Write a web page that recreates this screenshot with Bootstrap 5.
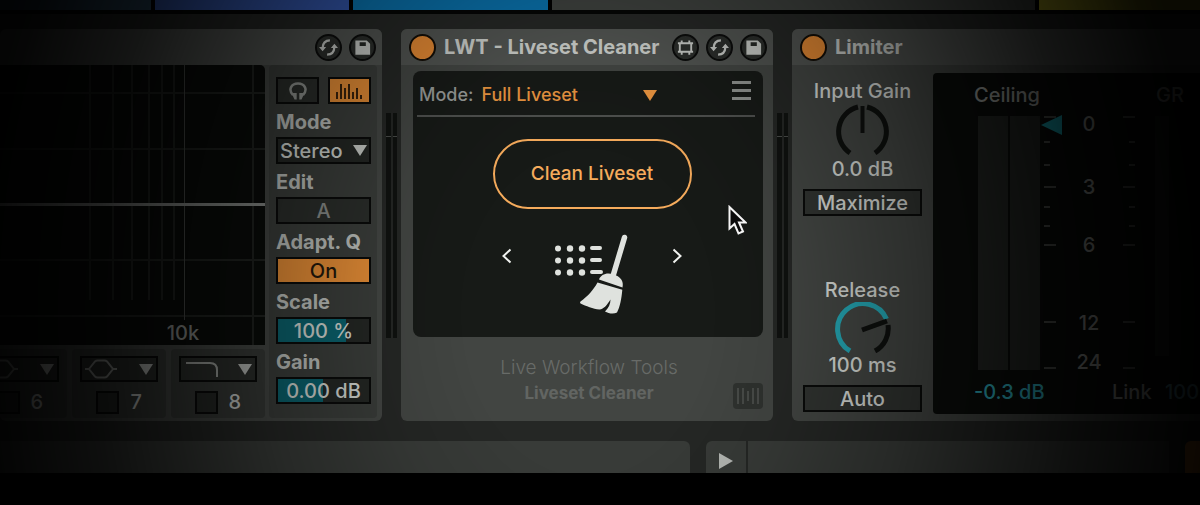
<!DOCTYPE html>
<html lang="en" data-bs-theme="dark">
<head>
<meta charset="utf-8">
<meta name="viewport" content="width=device-width, initial-scale=1">
<title>Liveset Cleaner</title>
<link href="https://cdn.jsdelivr.net/npm/bootstrap@5.3.0/dist/css/bootstrap.min.css" rel="stylesheet">
<script src="https://cdn.jsdelivr.net/npm/bootstrap@5.3.0/dist/js/bootstrap.bundle.min.js" defer></script>
<style>
  :root { --ink: #c8cbc7; --edge: #0a0b0a; --panel: #424542; --orange: #e08a35; --teal: #0b606b; }
  body { background: #000; color: var(--ink); font-family: Inter, "Liberation Sans", sans-serif; font-size: 20px; line-height: 24px; font-weight: 500; overflow-x: hidden; }
  button, select, input { font: inherit; color: inherit; }
  svg { display: block; }

  .clips { height: 10px; gap: 4px; }
  .rack { background: #252725; border-top: 4px solid #050605; padding: 15px 0 20px; gap: 4px; }
  .device { background: var(--panel); border-radius: 6px; overflow: hidden; min-width: 0; height: 392px; }
  .device-head { background: #505350; height: 36px; gap: 8px; font-weight: 700; }
  .lead-device { flex: 382 1 0; }
  .tool-device { flex: 0 0 372px; }
  .tail-device { flex: 408 1 0; border-radius: 6px 0 0 6px; }

  .power { width: 27px; height: 27px; border-radius: 50%; border: 2px solid #140f08; background: #e08733; padding: 0; }
  .round-btn { width: 27px; height: 27px; border-radius: 50%; border: 2px solid #0c0d0c; background: #2b2e2b; padding: 0; display: grid; place-items: center; color: #c4c7c3; }
  .head-tools { gap: 7px; padding-right: 6px; }

  .link-meter { width: 11px; height: 225px; margin-top: 84px; gap: 2px; }
  .link-meter span { flex: 1; background: linear-gradient(#101210 23px, #4a4d4a 23px, #4a4d4a 24px, #101210 24px); }

  .graph { background: #0a0c0a; height: 280px; border-radius: 0 5px 0 0; overflow: hidden; }
  .bands { gap: 5px; }
  .band { flex: 0 0 94px; background: #363936; border-radius: 4px; height: 69px; padding: 7px 8px; }
  .band-type { height: 26px; border: 2px solid var(--edge); background: #2b2e2b; padding: 0 3px; width: 100%; color: #b5b8b4; }
  .band-check { appearance: none; width: 23px; height: 23px; border: 2px solid var(--edge); background: #262926; margin: 0; }
  .side { flex: 0 0 108px; background: #393c39; border-radius: 4px; padding: 12px 6px 12px 7px; margin-right: 5px; height: 353px; }
  .side-label { height: 33px; line-height: 36px; font-weight: 700; color: #b8bbb7; white-space: nowrap; }
  .cell { display: block; width: 100%; height: 27px; line-height: 22px; border: 2px solid var(--edge); background: #2a2d2a; padding: 0; text-align: center; border-radius: 0; color: #ccd0cb; }
  .cell-on { background: var(--orange); color: #21170c; }
  .cell-select { appearance: none; text-align: left; padding: 0 2px; background: #232623; }
  .select-wrap::after { content: ""; position: absolute; right: 4px; top: 8px; border: 7px solid transparent; border-top: 11px solid #c4c7c3; border-bottom: 0; pointer-events: none; }

  .screen { background: #171a17; border-radius: 8px; margin: 6px 10px 0 12px; height: 266px; }
  .screen-bar { margin: 0 8px 0 4px; height: 46px; border-bottom: 2px solid #4e504e; padding: 3px 4px 0 2px; font-size: 18px; }
  .mode-select { appearance: none; border: 0; background: transparent; color: #e89440; width: 176px; padding: 0; height: 26px; }
  .mode-pick::after { border-top-color: #e89440; right: 0; }
  .menu-btn { border: 0; background: none; padding: 0; color: #8e918e; }
  .clean-btn { width: 199px; height: 70px; border: 2px solid #f5ab5c; border-radius: 35px; background: transparent; color: #f5ab5c; margin-top: 22px; font-size: 19px; }
  .step-btn { border: 0; background: none; padding: 0; color: #f0f2ef; margin-top: 14px; }
  .stage { height: 85px; margin-top: 25px; gap: 43px; }
  .credit { color: #686b68; font-weight: 300; font-size: 19px; line-height: 25px; padding-top: 18px; }
  .credit strong { font-size: 17px; font-weight: 700; color: #626562; }
  .bars-btn { right: 10px; bottom: 12px; border: 0; background: #2f322f; border-radius: 4px; padding: 4px 2px; width: 30px; height: 26px; }
  .pointer { left: 728px; top: 205px; z-index: 3; }

  .knobs { flex: 0 0 119px; margin: 0 11px; height: 347px; padding-top: 14px; color: #d4d7d3; }
  .knob-cell { background: #303330; color: #d4d7d3; }
  .levels { background: #0b0d0b; border-radius: 4px 0 0 4px; margin-top: 8px; height: 341px; overflow: hidden; }
  .levels text { font-size: 20px; fill: #9a9d99; }

  .status { height: 32px; background: #252725; }
  .status-pane { background: #383b38; }
  .play-btn { width: 40px; border: 0; background: #383b38; border-radius: 6px 0 0 0; padding: 7px 0 0; display: grid; place-items: center; }
  .shade { position: fixed; inset: 0; pointer-events: none; z-index: 2;
    background: radial-gradient(52% 160% at 49% 62%, rgba(0,0,0,0) 20%, rgba(0,0,0,.08) 33%, rgba(0,0,0,.3) 52%, rgba(0,0,0,.56) 68%, rgba(0,0,0,.75) 80%, rgba(0,0,0,.92) 96%, rgba(0,0,0,.94) 100%); }
</style>
</head>
<body>
<svg width="0" height="0" class="position-absolute" aria-hidden="true">
  <defs>
    <symbol id="swap" viewBox="0 0 20 20">
      <g fill="none" stroke="currentColor" stroke-width="2.400"><path d="M11.500 2.500C6.500 2.500 4 6 3.800 10.500M8.500 17.500C13.500 17.500 16 14 16.200 9.500"/></g>
      <path d="M0 9.500h7.500L3.800 14zM12.500 10.500H20L16.200 6z" fill="currentColor"/>
    </symbol>
    <symbol id="disk" viewBox="0 0 20 20">
      <path d="M2.500 2.500h12L18 6v11.500H2.500z" fill="currentColor"/><path d="M7 4.500h6.500v4H7z" fill="#262926"/>
    </symbol>
    <symbol id="frame" viewBox="0 0 20 20">
      <path d="M4 5.500h12v9H4zM6 2.500v3M14 2.500v3M6 14.500v3M14 14.500v3M2 5.500h16M2 14.500h16" fill="none" stroke="currentColor" stroke-width="2"/>
    </symbol>
    <symbol id="bell" viewBox="0 0 32 20">
      <path d="M0 10h4M28 10h4M4 10L10 2.500Q11 1.500 12.500 1.500h7Q21 1.500 22 2.500L28 10L22 17.500Q21 18.500 19.500 18.500h-7Q11 18.500 10 17.500Z" fill="none" stroke="#8d908c" stroke-width="2"/>
    </symbol>
    <symbol id="down" viewBox="0 0 14 11"><path d="M0 0h14L7 11z" fill="currentColor"/></symbol>
  </defs>
</svg>

<div class="clips d-flex">
  <div style="flex:151 1 0;background:#2b475e"></div>
  <div style="flex:195 1 0;background:#3355a8"></div>
  <div style="flex:195 1 0;background:#0a6fa8"></div>
  <div style="flex:484 1 0;background:#3d403d"></div>
  <div style="flex:161 1 0;background:#b0a922"></div>
</div>

<main class="rack d-flex">
  <section class="device lead-device">
    <header class="device-head d-flex align-items-center justify-content-end">
      <div class="head-tools d-flex">
        <button class="round-btn" aria-label="Hot-swap"><svg width="19" height="19"><use href="#swap"/></svg></button>
        <button class="round-btn" aria-label="Save preset"><svg width="19" height="19"><use href="#disk"/></svg></button>
      </div>
    </header>
    <div class="d-flex gap-1">
      <div class="flex-grow-1 overflow-hidden">
        <div class="graph d-flex justify-content-end">
          <svg class="flex-shrink-0" width="265" height="280" viewBox="0 0 265 280">
            <g stroke="#1f221f" stroke-width="2">
              <path d="M0 28h265M0 84h265M0 195h265M0 251h265"/>
              <path d="M90 0v235M113 0v235M132 0v235M149 0v235M162 0v235M174 0v235M253 0v280"/>
            </g>
            <path d="M184.500 0v255" stroke="#454845"/>
            <path d="M0 139.500h265" stroke="#858885" stroke-width="3"/>
            <text x="183" y="275" text-anchor="middle" font-size="20" fill="#858885">10k</text>
          </svg>
        </div>
        <div class="bands d-flex justify-content-end mt-1">
          <div class="band">
            <button class="band-type d-flex align-items-center justify-content-between" aria-label="Band 6 type"><svg width="32" height="20"><use href="#bell"/></svg><svg width="14" height="11"><use href="#down"/></svg></button>
            <label class="d-flex justify-content-between align-items-center pt-2 ps-3 pe-3"><input class="band-check" type="checkbox"><span>6</span></label>
          </div>
          <div class="band">
            <button class="band-type d-flex align-items-center justify-content-between" aria-label="Band 7 type"><svg width="32" height="20"><use href="#bell"/></svg><svg width="14" height="11"><use href="#down"/></svg></button>
            <label class="d-flex justify-content-between align-items-center pt-2 ps-3 pe-3"><input class="band-check" type="checkbox"><span>7</span></label>
          </div>
          <div class="band">
            <button class="band-type d-flex align-items-center justify-content-between" aria-label="Band 8 type"><svg width="36" height="20" viewBox="0 0 36 20"><path d="M2 4h24q7 0 7 7v7" fill="none" stroke="#9c9f9b" stroke-width="2"/></svg><svg width="14" height="11"><use href="#down"/></svg></button>
            <label class="d-flex justify-content-between align-items-center pt-2 ps-3 pe-3"><input class="band-check" type="checkbox"><span>8</span></label>
          </div>
        </div>
      </div>
      <div class="side">
        <div class="d-flex" style="gap:9px">
          <button class="cell" aria-label="Audition"><svg class="mx-auto" width="20" height="20" viewBox="0 0 20 20"><path d="M5 14C0 9 3 2.500 10 2.500S20 9 15 14" fill="none" stroke="#8d908c" stroke-width="2.500"/><path d="M3.500 12h5.200V18.500H6.500zM16.500 12h-5.200V18.500H13.500z" fill="#8d908c"/></svg></button>
          <button class="cell cell-on" aria-label="Analyze"><svg class="mx-auto" width="30" height="20" viewBox="0 0 30 20"><path d="M2 18v-7M6 18V3M10 18V7M14 18V3M18 18v-7M22 18V7M26 18v-4" stroke="#3a220c" stroke-width="2"/></svg></button>
        </div>
        <label class="side-label d-block" for="eqMode">Mode</label>
        <div class="position-relative select-wrap"><select id="eqMode" class="cell cell-select"><option>Stereo</option></select></div>
        <label class="side-label d-block" for="eqEdit">Edit</label>
        <button id="eqEdit" class="cell" style="color:#858885">A</button>
        <label class="side-label d-block" for="eqAdapt">Adapt. Q</label>
        <button id="eqAdapt" class="cell cell-on">On</button>
        <label class="side-label d-block" for="eqScale">Scale</label>
        <input id="eqScale" class="cell" value="100 %" style="background:linear-gradient(90deg,var(--teal) 75%,#232623 75%)">
        <label class="side-label d-block" for="eqGain">Gain</label>
        <input id="eqGain" class="cell" value="0.00 dB" style="background:linear-gradient(90deg,var(--teal) 50%,#232623 50%)">
      </div>
    </div>
  </section>

  <div class="link-meter d-flex"><span></span><span></span></div>

  <section class="device tool-device position-relative">
    <header class="device-head d-flex align-items-center ps-2">
      <button class="power" aria-label="Device on"></button>
      <span class="flex-grow-1 text-nowrap">LWT - Liveset Cleaner</span>
      <div class="head-tools d-flex">
        <button class="round-btn" aria-label="Edit device"><svg width="19" height="19"><use href="#frame"/></svg></button>
        <button class="round-btn" aria-label="Hot-swap"><svg width="19" height="19"><use href="#swap"/></svg></button>
        <button class="round-btn" aria-label="Save preset"><svg width="19" height="19"><use href="#disk"/></svg></button>
      </div>
    </header>
    <div class="screen">
      <div class="screen-bar d-flex align-items-center">
        <label for="cleanMode" class="pe-2" style="color:#969996">Mode:</label>
        <div class="position-relative select-wrap mode-pick"><select id="cleanMode" class="mode-select"><option>Full Liveset</option></select></div>
        <button class="menu-btn ms-auto mb-2" aria-label="Menu"><svg width="19" height="19" viewBox="0 0 19 19"><path d="M0 1.500h19M0 9.500h19M0 17.500h19" stroke="currentColor" stroke-width="3"/></svg></button>
      </div>
      <div class="text-center ps-2"><button class="clean-btn">Clean Liveset</button></div>
      <div class="stage d-flex justify-content-center align-items-start ps-2">
        <button class="step-btn" aria-label="Previous"><svg width="10" height="16" viewBox="0 0 10 16"><path d="M8.500 1.500L1.500 8l7 6.500" fill="none" stroke="currentColor" stroke-width="2"/></svg></button>
        <svg width="74" height="82" viewBox="0 0 74 82" fill="#dfe2de" class="flex-shrink-0">
          <g>
            <circle cx="3" cy="14.500" r="3"/><circle cx="15" cy="14.500" r="3.200"/><circle cx="27" cy="14.500" r="3.200"/>
            <circle cx="3" cy="26.500" r="3"/><circle cx="15" cy="26.500" r="3.200"/><circle cx="27" cy="26.500" r="3.200"/>
            <circle cx="3" cy="38.500" r="3"/><circle cx="15" cy="38.500" r="3.200"/><circle cx="27" cy="38.500" r="3.200"/>
          </g>
          <path d="M37 14h8M37 26h8M37 38h9" stroke="#dfe2de" stroke-width="4" stroke-linecap="round"/>
          <path d="M69.500 3.500L58 42" stroke="#dfe2de" stroke-width="5.500" stroke-linecap="round"/>
          <path d="M44 45.500C46 40.500 51.500 38.300 58 40.300C65.500 42.500 69 47 67.500 53.500Z"/>
          <path d="M42.500 48.500L67.300 55.800C66.500 65 65 73 62 78.500C58.500 80.500 53.500 79.500 50 77.500C53.500 74 55.500 70 55.500 65.500C52 71 49 75 44.500 75.500C38 75 31 72 25.500 69.500Q24.500 68.500 25.500 67.500C33 62 38 56.500 42.500 48.500Z"/>
        </svg>
        <button class="step-btn" aria-label="Next"><svg width="10" height="16" viewBox="0 0 10 16"><path d="M1.500 1.500L8.500 8l-7 6.500" fill="none" stroke="currentColor" stroke-width="2"/></svg></button>
      </div>
    </div>
    <div class="credit text-center pe-0 ps-1">Live Workflow Tools<br><strong>Liveset Cleaner</strong></div>
    <button class="bars-btn position-absolute" aria-label="Device info"><svg width="26" height="18" viewBox="0 0 26 18"><path d="M3 1v16M8 1v16M13 4v10M18 1v16M23 1v16" stroke="#484b48" stroke-width="2"/></svg></button>
  </section>

  <div class="link-meter d-flex"><span></span><span></span></div>

  <section class="device tail-device">
    <header class="device-head d-flex align-items-center ps-2">
      <button class="power" aria-label="Device on"></button><span>Limiter</span>
    </header>
    <div class="d-flex">
      <div class="knobs d-flex flex-column align-items-center">
        <span class="text-nowrap">Input Gain</span>
        <svg width="60" height="54" viewBox="0 0 60 54" class="flex-shrink-0"><path d="M17 50A25.500 25.500 0 0 1 25 4M34 4A25.500 25.500 0 0 1 42 50" fill="none" stroke="#0e100e" stroke-width="5"/><path d="M29.500 3v27" stroke="#0e100e" stroke-width="4"/></svg>
        <span>0.0 dB</span>
        <button class="cell knob-cell mt-2">Maximize</button>
        <span class="mt-auto">Release</span>
        <svg width="60" height="51" viewBox="0 0 60 51" class="flex-shrink-0"><path d="M17 49A25.500 25.500 0 1 1 53.500 17" fill="none" stroke="#25a5b2" stroke-width="5"/><path d="M55 23A25.500 25.500 0 0 1 42 49M29 28L54 19" fill="none" stroke="#0e100e" stroke-width="5"/></svg>
        <span>100 ms</span>
        <button class="cell knob-cell mt-2">Auto</button>
      </div>
      <div class="levels flex-grow-1">
        <svg width="100%" height="341">
          <path d="M45 43h30v254H45zM77 43h30v254H77z" fill="#232623"/>
          <path d="M222 43h14v240h-14z" fill="#1c1f1c"/>
          <path d="M111 44h12M111 114h12M111 172h12M111 249h12M111 295h12M111 69h6M111 92h6M111 134h6M111 153h6M190 44h12M190 114h12M190 172h12M190 249h12M190 295h12M196 69h6M196 92h6M196 134h6M196 153h6" stroke="#4c4f4b" stroke-width="2"/>
          <path d="M108 52l21-10v20z" fill="#18a4b1"/>
          <text x="41" y="29">Ceiling</text><text x="223" y="29">GR</text>
          <g text-anchor="middle"><text x="156" y="58">0</text><text x="156" y="121">3</text><text x="156" y="179">6</text><text x="156" y="257">12</text><text x="156" y="296">24</text></g>
          <text x="41" y="326" style="fill:#30b0c0">-0.3 dB</text><text x="179" y="326">Link</text><text x="232" y="326" style="fill:#5b95a4">100</text>
        </svg>
      </div>
    </div>
  </section>
</main>

<footer class="status d-flex">
  <div class="status-pane" style="flex:688 1 0;border-radius:0 6px 0 0"></div>
  <button class="play-btn ms-3" style="margin-right:2px" aria-label="Play"><svg width="14" height="16" viewBox="0 0 14 16"><path d="M0 0l14 8-14 8z" fill="#b4b7b3"/></svg></button>
  <div class="status-pane" style="flex:420 1 0"></div>
  <div class="ms-3" style="flex:15 1 0;background:#c9741f;border-radius:6px 0 0 0"></div>
</footer>

<svg class="pointer position-absolute" width="19" height="31" viewBox="0 0 19 31"><path d="M1.500 2v21.500l5-4.500 4 9.500 4.500-2-4-9h6.500z" fill="#0a0a0a" stroke="#f4f4f4" stroke-width="2"/></svg>
<div class="shade"></div>
</body>
</html>
